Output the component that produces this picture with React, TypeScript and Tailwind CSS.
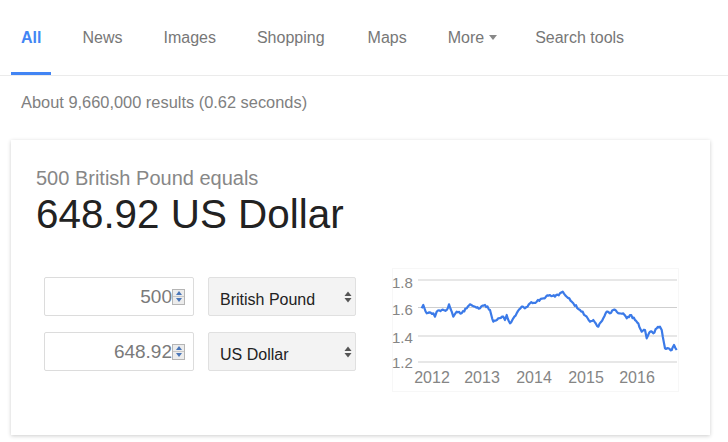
import React from 'react'

const tabs = [
  { t: 'All', ml: '' },
  { t: 'News', ml: 'ml-[21px]' },
  { t: 'Images', ml: 'ml-[21px]' },
  { t: 'Shopping', ml: 'ml-[21px]' },
  { t: 'Maps', ml: 'ml-[23px]' },
  { t: 'More', ml: 'ml-[21px]' },
  { t: 'Search tools', ml: 'ml-[18px]' },
]

// chart trace, taken roughly from the reference (x/y in 3x zoom units)
const knots: [number, number][] = [
  [155, 145], [160, 135], [170, 160], [190, 160], [195, 170], [200, 155], [215, 150],
  [230, 150], [237, 133], [250, 170], [260, 155], [275, 160], [290, 145], [300, 133],
  [315, 140], [330, 145], [345, 135], [360, 150], [370, 185], [385, 175], [400, 170],
  [405, 180], [410, 165], [420, 190], [430, 175], [440, 160], [455, 140], [465, 145],
  [480, 130], [500, 125], [520, 115], [540, 105], [555, 110], [570, 100], [578, 95],
  [590, 110], [610, 130], [630, 150], [650, 170], [660, 185], [670, 180], [685, 200],
  [700, 175], [710, 155], [720, 160], [730, 150], [740, 155], [760, 160], [770, 175],
  [780, 165], [795, 180], [805, 190], [815, 215], [825, 210], [830, 235], [840, 215],
  [850, 220], [860, 205], [870, 200], [875, 210], [885, 265], [895, 265], [905, 270],
  [912, 255], [920, 270],
]

function buildLine() {
  let seed = 11
  const rnd = () => {
    seed = (seed * 9301 + 49297) % 233280
    return seed / 233280
  }
  const pts: string[] = []
  for (let i = 0; i < knots.length - 1; i++) {
    const [x0, y0] = knots[i]
    const [x1, y1] = knots[i + 1]
    const steps = Math.max(1, Math.round((x1 - x0) / 4))
    for (let s = 0; s < steps; s++) {
      const t = s / steps
      const x = x0 + (x1 - x0) * t
      const jitter = s === 0 ? 0 : (rnd() - 0.5) * 7
      const y = y0 + (y1 - y0) * t + jitter
      pts.push(`${(x / 3 - 10).toFixed(1)},${(y / 3 - 8).toFixed(1)}`)
    }
  }
  const [lx, ly] = knots[knots.length - 1]
  pts.push(`${(lx / 3 - 10).toFixed(1)},${(ly / 3 - 8).toFixed(1)}`)
  return pts.join(' ')
}

function Spinner() {
  return (
    <div className="flex flex-col w-[13px] h-[16px] border border-[#b5b5b5] bg-[#ececec]">
      <div className="flex-1 flex items-center justify-center border-b border-[#c8c8c8]">
        <svg width="6" height="4" viewBox="0 0 6 4"><path d="M0 4 L3 0 L6 4 Z" fill="#4a76b8" /></svg>
      </div>
      <div className="flex-1 flex items-center justify-center">
        <svg width="6" height="4" viewBox="0 0 6 4"><path d="M0 0 L3 4 L6 0 Z" fill="#4a76b8" /></svg>
      </div>
    </div>
  )
}

function NumberBox({ value }: { value: string }) {
  return (
    <div className="w-[150px] h-[39px] border border-[#dcdcdc] rounded-[2px] bg-white flex items-center justify-end pr-[8px]">
      <span className="text-[19px] text-[#7a7a7a] leading-none">{value}</span>
      <Spinner />
    </div>
  )
}

function SelectBox({ label }: { label: string }) {
  return (
    <div className="w-[148px] h-[39px] border border-[#e0e0e0] rounded-[2px] bg-[#f3f3f3] flex items-center justify-between pl-[11px] pr-[2px]">
      <span className="text-[16px] text-[#222] pt-[6px]">{label}</span>
      <svg width="10" height="14" viewBox="0 0 10 14">
        <path d="M1.5 6 L5 1.5 L8.5 6 Z" fill="#555" />
        <path d="M1.5 8 L5 12.5 L8.5 8 Z" fill="#555" />
      </svg>
    </div>
  )
}

function Chart() {
  const grid = [
    { v: '1.8', y: 12, base: 20 },
    { v: '1.6', y: 39.5, base: 47 },
    { v: '1.4', y: 68, base: 75 },
    { v: '1.2', y: 94, base: 100 },
  ]
  const years = [
    { t: '2012', x: 52 },
    { t: '2013', x: 102 },
    { t: '2014', x: 154 },
    { t: '2015', x: 206 },
    { t: '2016', x: 257 },
  ]
  return (
    <svg width="310" height="125" viewBox="0 0 310 125" className="block">
      <rect x="12.5" y="0.5" width="286" height="123" fill="none" stroke="#f7f7f7" />
      {grid.map((g) => (
        <g key={g.v}>
          <line x1="38" x2="297" y1={g.y} y2={g.y} stroke="#cfcfcf" strokeWidth="1" />
          <text x="12" y={g.base} fontSize="15" fill="#858585" fontFamily="'Liberation Sans', Arial, sans-serif">{g.v}</text>
        </g>
      ))}
      {years.map((y) => (
        <text key={y.t} x={y.x} y="115" fontSize="16" fill="#858585" textAnchor="middle" fontFamily="'Liberation Sans', Arial, sans-serif">{y.t}</text>
      ))}
      <polyline points={buildLine()} fill="none" stroke="#3b7ae8" strokeWidth="2.2" strokeLinejoin="round" />
    </svg>
  )
}

export default function App() {
  return (
    <div className="w-[728px] h-[442px] bg-white overflow-hidden font-['Liberation_Sans',Arial,sans-serif]">
      <div className="h-[76px] border-b border-[#ebebeb] flex pl-[11px]">
        {tabs.map(({ t, ml }, i) => (
          <div
            key={t}
            className={`h-[75px] px-[10px] flex items-center text-[16px] ${ml} ${i === 0 ? 'border-b-[3px] border-[#4285f4] text-[#4285f4] font-bold pt-[3px]' : 'text-[#777]'}`}
          >
            {t}
            {t === 'More' && (
              <svg width="8" height="5" viewBox="0 0 8 5" className="ml-[5px]"><path d="M0 0 L4 5 L8 0 Z" fill="#888" /></svg>
            )}
          </div>
        ))}
      </div>
      <div className="pl-[21px] pt-[16px] leading-[20px] text-[16.4px] text-[#808080]">
        About 9,660,000 results (0.62 seconds)
      </div>
      <div className="ml-[11px] mt-[28px] w-[699px] h-[295px] bg-white shadow-[0_1px_4px_rgba(0,0,0,0.2)] pl-[25px] pt-[26px]">
        <div className="text-[20px] leading-[24px] text-[#878787]">500 British Pound equals</div>
        <div className="text-[40.4px] leading-[48px] text-[#222]">648.92 US Dollar</div>
        <div className="flex mt-[30px]">
          <div className="ml-[8px] mt-[9px] flex flex-col gap-[16px]">
            <div className="flex gap-[14px]">
              <NumberBox value="500" />
              <SelectBox label="British Pound" />
            </div>
            <div className="flex gap-[14px]">
              <NumberBox value="648.92" />
              <SelectBox label="US Dollar" />
            </div>
          </div>
          <div className="ml-[24px]">
            <Chart />
          </div>
        </div>
      </div>
    </div>
  )
}
